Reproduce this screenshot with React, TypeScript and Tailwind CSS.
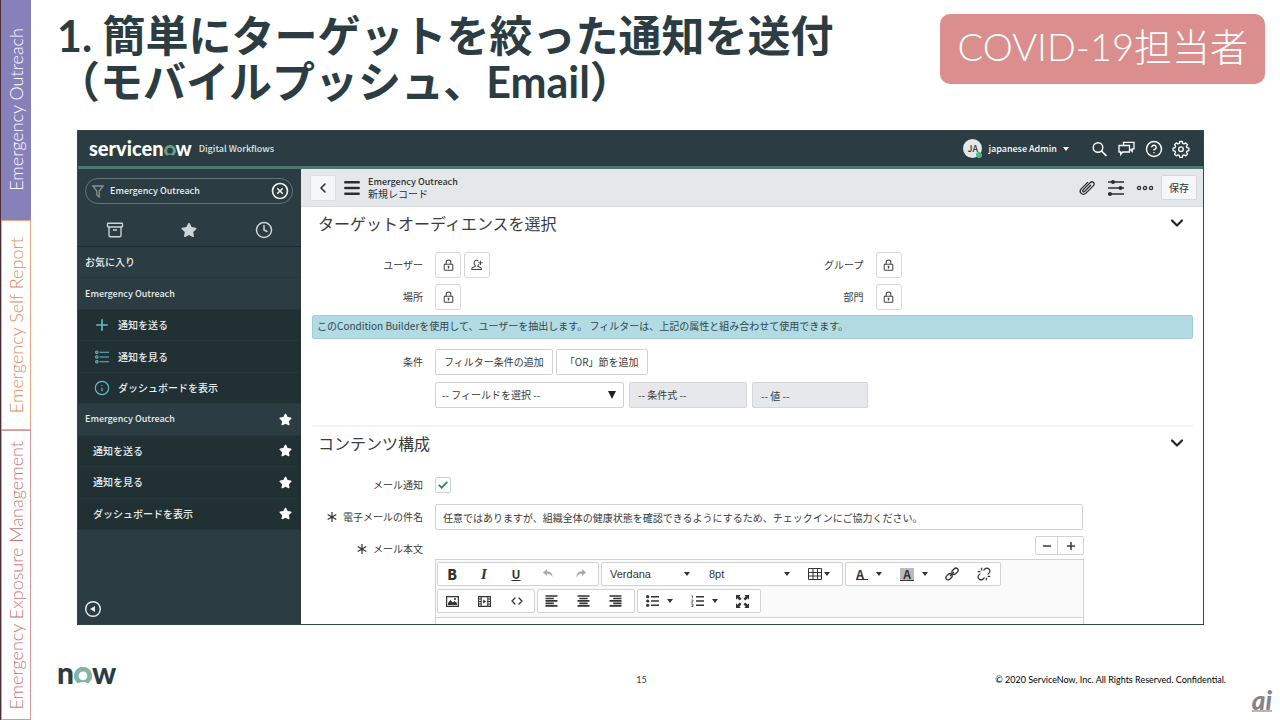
import type { ReactNode } from "react";
import {
  Archive,
  ChevronDown,
  ChevronLeft,
  CircleHelp,
  CircleX,
  Clock,
  Code,
  Info,
  Menu,
  Minus,
  Plus,
  Unlink,
} from "lucide-react";
import { FaStar } from "react-icons/fa";

const ui = "font-['Noto_Sans_CJK_JP',sans-serif]";

function Caret({ className = "" }: { className?: string }) {
  return (
    <svg viewBox="0 0 6 4" className={"h-1 w-1.5 shrink-0 fill-current " + className} aria-hidden="true">
      <path d="M0 0h6L3 4z" />
    </svg>
  );
}

function RingO({ className }: { className: string }) {
  return (
    <svg viewBox="0 0 18 17" className={className} aria-hidden="true">
      <path
        fill="currentColor"
        d="M9 0a9 9 0 0 0-6.2 15.6c.4.5 1 .7 1.6.5a11 11 0 0 1 9.200 0c.6.2 1.200 0 1.600-.5A9 9 0 0 0 9 0Zm0 13.200a4.400 4.400 0 1 1 0-8.800 4.400 4.400 0 0 1 0 8.800Z"
      />
    </svg>
  );
}

function RailItem({ label, className }: { label: string; className: string }) {
  return (
    <a
      href="#"
      className={
        "flex w-[30px] items-center justify-center font-['Lato',sans-serif] text-[18px] leading-6 font-light whitespace-nowrap " +
        className
      }
    >
      <span className="rotate-180 [writing-mode:vertical-rl]">{label}</span>
    </a>
  );
}

function LockIcon() {
  return (
    <svg viewBox="0 0 12 14" className="h-3 w-[11px]" fill="none" stroke="currentColor" strokeWidth="1.200" aria-hidden="true">
      <rect x="1" y="6" width="10" height="7" rx="0.8" />
      <path d="M3.300 6V3.800a2.700 2.700 0 0 1 5.400 0V6M6 8v3M4.800 9.300h2.400" />
    </svg>
  );
}

function AddUserIcon() {
  return (
    <svg viewBox="0 0 14 14" className="size-3" fill="none" stroke="currentColor" strokeWidth="1.200" aria-hidden="true">
      <path d="M8.500 2.400A2.800 2.800 0 0 0 3.600 4.500c0 1.500.6 2.500 1.400 3.200v1L1.800 10c-.6.300-.9.900-.9 2.200h11.200c0-1.300-.3-1.900-.9-2.200L8 8.700v-1c.5-.4.9-1 1.100-1.600M11 2v5M8.500 4.500h5" />
    </svg>
  );
}

function SquareButton({ label, children }: { label: string; children: ReactNode }) {
  return (
    <button
      type="button"
      aria-label={label}
      className="flex size-[26px] items-center justify-center rounded-[3px] border border-[#d5d7d9] bg-white text-[#444]"
    >
      {children}
    </button>
  );
}

function FieldRow({ label, children, required = false, htmlFor }: { label: string; children: ReactNode; required?: boolean; htmlFor?: string }) {
  return (
    <div className="flex gap-3">
      <label htmlFor={htmlFor} className="flex h-[26px] w-[111px] shrink-0 items-center justify-end gap-1.5 whitespace-nowrap">
        {required && (
          <svg viewBox="0 0 10 10" className="size-2.5" stroke="#333" strokeWidth="1.200" aria-hidden="true">
            <path d="M5 0v10M.7 2.500l8.600 5M9.300 2.500l-8.600 5" />
          </svg>
        )}
        {label}
      </label>
      {children}
    </div>
  );
}

function SectionTitle({ children }: { children: ReactNode }) {
  return (
    <div className="flex h-8 items-center justify-between pr-1.5 pl-1.5">
      <h2 className="text-[16px] leading-6 text-[#3c3c3c]">{children}</h2>
      <button type="button" aria-label="セクションを折りたたむ">
        <ChevronDown className="size-5 text-[#222]" strokeWidth={2.6} />
      </button>
    </div>
  );
}

function ToolGroup({ className, children }: { className: string; children: ReactNode }) {
  return (
    <div className={"flex h-6 shrink-0 items-center rounded-[2px] border border-[#d0d2d4] bg-white text-[#333] " + className}>
      {children}
    </div>
  );
}

function Tool({ label, children, className = "w-[32px]" }: { label: string; children: ReactNode; className?: string }) {
  return (
    <button type="button" aria-label={label} className={"flex h-full items-center justify-center " + className}>
      {children}
    </button>
  );
}

function NavIcon({ name }: { name: string }) {
  if (name === "plus") return <Plus className="size-[18px] shrink-0" strokeWidth={2.2} />;
  if (name === "info") return <Info className="size-4 shrink-0" strokeWidth={1.8} />;
  return (
    <svg viewBox="0 0 14 14" className="size-3.5" fill="none" stroke="currentColor" strokeWidth="1.100" aria-hidden="true">
      <circle cx="1.800" cy="2.200" r="1.200" />
      <circle cx="1.800" cy="7" r="1.200" />
      <circle cx="1.800" cy="11.800" r="1.200" />
      <path d="M4.500 2.200H14M4.500 7H14M4.500 11.800H14" />
    </svg>
  );
}

const navRows = [
  { label: "お気に入り", kind: "section" },
  { label: "Emergency Outreach", kind: "head" },
  { label: "通知を送る", kind: "icon", icon: "plus" },
  { label: "通知を見る", kind: "icon", icon: "list" },
  { label: "ダッシュボードを表示", kind: "icon", icon: "info" },
  { label: "Emergency Outreach", kind: "head", star: true },
  { label: "通知を送る", kind: "sub", star: true },
  { label: "通知を見る", kind: "sub", star: true },
  { label: "ダッシュボードを表示", kind: "sub", star: true },
];

const rowStyles: Record<string, string> = {
  section: "bg-[#2b3d42] pl-[7px] text-[10px]",
  head: "bg-[#2b3d42] pl-[7px] text-[9px]",
  icon: "bg-[#213033] pl-4 text-[10px]",
  sub: "bg-[#213033] pl-[15px] text-[10px]",
};

function Sidebar() {
  return (
    <nav className="flex w-[223px] shrink-0 flex-col bg-[#2b3d42] text-[#e9eeee]">
      <div className="pt-[9px] pr-2 pl-[7px]">
        <label className="flex h-[26px] items-center rounded-full border border-[#62757a] pr-[3px] pl-1.5">
          <svg viewBox="0 0 12 13" className="h-[13px] w-3 text-[#83949a]" fill="none" stroke="currentColor" strokeWidth="1.300" aria-hidden="true">
            <path d="M.8 1h10.400L7.200 6v6L4.800 10V6z" />
          </svg>
          <input
            aria-label="ナビゲーターをフィルター"
            defaultValue="Emergency Outreach"
            className="ml-1.5 min-w-0 flex-1 bg-transparent text-[9px] leading-4 font-medium outline-none"
          />
          <button type="button" aria-label="クリア">
            <CircleX className="size-[18px]" strokeWidth={2.2} />
          </button>
        </label>
      </div>
      <div className="grid h-[43px] grid-cols-3 place-items-center border-b border-[#1d2b2e] pt-2.5 text-[#ccd4d5]">
        <button type="button" aria-label="すべて"><Archive className="size-[18px]" strokeWidth={1.8} /></button>
        <button type="button" aria-label="お気に入り"><FaStar className="size-4" /></button>
        <button type="button" aria-label="履歴"><Clock className="size-[18px]" strokeWidth={2} /></button>
      </div>
      <ul className="grid h-[283px] auto-rows-fr">
        {navRows.map((row, i) => (
          <li key={i} className={"flex items-center border-b border-[#26373b] pr-[9px] leading-4 font-medium " + rowStyles[row.kind]}>
            <a href="#" className="flex flex-1 items-center">
              {row.icon && (
                <span className="mr-2 flex w-4 justify-center text-[#66b9c9]">
                  <NavIcon name={row.icon} />
                </span>
              )}
              {row.label}
            </a>
            {row.star && <FaStar className="size-[13px] text-white" />}
          </li>
        ))}
      </ul>
      <div className="mt-auto flex px-1.5 pb-1.5">
        <button type="button" aria-label="ナビゲーターを閉じる">
          <svg viewBox="0 0 18 18" className="size-[18px]" aria-hidden="true">
            <circle cx="9" cy="9" r="7.300" fill="none" stroke="currentColor" strokeWidth="1.400" />
            <path d="M6 9l5-3v6z" fill="currentColor" />
          </svg>
        </button>
      </div>
    </nav>
  );
}

function AppHeader() {
  return (
    <header className="flex h-[38px] items-center justify-between border-b-[3px] border-[#4a7a6d] bg-[#2b3d42] pr-[13px] pl-[11px] text-white">
      <div className="flex items-center">
        <a href="#" aria-label="servicenow" className="-mt-0.5 flex items-baseline font-['Lato',sans-serif] text-[20px] leading-7 font-black">
          servicen
          <RingO className="h-[11px] w-3 text-[#62a08d]" />w
        </a>
        <span className="ml-[7px] text-[9px] leading-4 font-medium text-[#dfe5e5]">Digital Workflows</span>
      </div>
      <div className="flex items-center">
        <button type="button" className="flex items-center text-[9px] leading-4 font-medium">
          <span className="relative mr-1.5 flex size-[19px] items-center justify-center rounded-full bg-[#e4e8e8] text-[#333]">
            JA
            <span className="absolute right-0 bottom-0 size-1.5 rounded-full bg-[#3fc08a]" />
          </span>
          japanese Admin
          <Caret className="ml-1.5" />
        </button>
        <div className="ml-[22px] flex items-center gap-[9px]">
          <button type="button" aria-label="検索">
            <svg viewBox="0 0 18 18" className="size-[18px]" fill="none" stroke="currentColor" strokeWidth="1.400" aria-hidden="true">
              <circle cx="7" cy="7.500" r="4.800" />
              <path d="M10.500 11l5 5" strokeWidth="1.700" />
            </svg>
          </button>
          <button type="button" aria-label="会話">
            <svg viewBox="0 0 18 18" className="size-[18px]" fill="none" stroke="currentColor" strokeWidth="1.300" aria-hidden="true">
              <path d="M5.500 5.500V2.300H16v6.500h-1.800v2.500l-1.800-2M1 5.500h10.500V12H4.700l-2 2.500V12H1z" />
            </svg>
          </button>
          <button type="button" aria-label="ヘルプ"><CircleHelp className="size-[18px]" strokeWidth={1.9} /></button>
          <button type="button" aria-label="設定">
            <svg viewBox="0 0 18 18" className="size-[18px]" fill="none" stroke="currentColor" strokeWidth="1.300" strokeLinejoin="round" aria-hidden="true">
              <path d="M7.700 1.500h2.600l.4 2 1.300.5 1.700-1.100 1.800 1.800-1.100 1.700.5 1.300 2 .4v2.600l-2 .4-.5 1.300 1.100 1.700-1.800 1.800-1.700-1.100-1.300.5-.4 2H7.700l-.4-2-1.300-.5-1.700 1.100-1.800-1.800 1.100-1.700-.5-1.300-2-.4V8.100l2-.4.5-1.300-1.100-1.700 1.800-1.800L6 4l1.300-.5z" />
              <circle cx="9" cy="9.200" r="2.300" />
            </svg>
          </button>
        </div>
      </div>
    </header>
  );
}

function RecordBar() {
  return (
    <div className="flex h-[38px] items-center justify-between border-b border-[#d9dcdf] bg-[#e5e8eb] pr-1.5 pl-[9px] text-[#2e2e2e]">
      <div className="flex items-center">
        <button type="button" aria-label="戻る" className="flex size-[26px] items-center justify-center rounded-[2px] border border-[#dcdfe1] bg-[#f5f6f7]">
          <ChevronLeft className="size-4" strokeWidth={2.4} />
        </button>
        <button type="button" aria-label="メニュー" className="ml-1.5">
          <Menu className="size-5" strokeWidth={3} />
        </button>
        <h1 className="ml-1.5 flex flex-col leading-3">
          <span className="text-[9px] font-medium">Emergency Outreach</span>
          <span className="text-[10px]">新規レコード</span>
        </h1>
      </div>
      <div className="flex items-center gap-[11px]">
        <button type="button" aria-label="添付ファイル">
          <svg viewBox="0 0 18 18" className="size-[18px]" fill="none" stroke="currentColor" strokeWidth="1.300" strokeLinecap="round" aria-hidden="true">
            <path
              transform="rotate(45 9 9)"
              d="M5.500 4.500v9.200a3.200 3.200 0 0 0 6.400 0V2.700a2.200 2.200 0 0 0-4.400 0v10.500a1.100 1.100 0 0 0 2.200 0V4.500"
            />
          </svg>
        </button>
        <button type="button" aria-label="パーソナライズ">
          <svg viewBox="0 0 18 18" className="size-[18px]" stroke="currentColor" strokeWidth="1.500" aria-hidden="true">
            <path d="M1 3h16M1 9h16M1 15h16" />
            <circle cx="6" cy="3" r="2" fill="currentColor" stroke="none" />
            <circle cx="13.500" cy="9" r="2" fill="currentColor" stroke="none" />
            <circle cx="3" cy="15" r="2" fill="currentColor" stroke="none" />
          </svg>
        </button>
        <button type="button" aria-label="その他">
          <svg viewBox="0 0 18 6" className="h-1.5 w-[18px]" fill="none" stroke="currentColor" strokeWidth="1.300" aria-hidden="true">
            <circle cx="3" cy="3" r="1.600" />
            <circle cx="9" cy="3" r="1.600" />
            <circle cx="15" cy="3" r="1.600" />
          </svg>
        </button>
        <button type="button" className="-ml-1 h-[25px] rounded-[2px] border border-[#d5d8da] bg-[#f5f6f7] px-[7px] text-[10px]">保存</button>
      </div>
    </div>
  );
}

function Audience() {
  const btn = "h-[26px] rounded-[2px] border border-[#d0d2d4] bg-white px-2";
  const disabled = "h-[26px] appearance-none rounded-[2px] border border-[#d3d6d9] bg-[#e6e8eb] pl-2 opacity-100";
  return (
    <section className="border-b-2 border-[#f3f3f3] pb-[17px]">
      <SectionTitle>ターゲットオーディエンスを選択</SectionTitle>
      <div className="mt-[13px] grid grid-cols-2 gap-y-1.5">
        <FieldRow label="ユーザー">
          <div className="flex gap-[3px]">
            <SquareButton label="ユーザーのロックを解除"><LockIcon /></SquareButton>
            <SquareButton label="自分を追加"><AddUserIcon /></SquareButton>
          </div>
        </FieldRow>
        <FieldRow label="グループ">
          <SquareButton label="グループのロックを解除"><LockIcon /></SquareButton>
        </FieldRow>
        <FieldRow label="場所">
          <SquareButton label="場所のロックを解除"><LockIcon /></SquareButton>
        </FieldRow>
        <FieldRow label="部門">
          <SquareButton label="部門のロックを解除"><LockIcon /></SquareButton>
        </FieldRow>
      </div>
      <p className="mt-[5px] rounded-[2px] border border-[#9fcdd6] bg-[#b3dbe3] px-1 pt-px pb-[3px] leading-[18px] text-[#2c4a50]">
        このCondition Builderを使用して、ユーザーを抽出します。 フィルターは、上記の属性と組み合わせて使用できます。
      </p>
      <div className="mt-2.5">
        <FieldRow label="条件">
          <div className="flex flex-col gap-[7px]">
            <div className="flex gap-[3px]">
              <button type="button" className={btn}>フィルター条件の追加</button>
              <button type="button" className={btn}>「OR」節を追加</button>
            </div>
            <div className="flex gap-[5px]">
              <div className="grid items-center">
                <select aria-label="フィールド" className="col-start-1 row-start-1 h-[26px] w-[189px] appearance-none rounded-[2px] border border-[#d0d2d4] bg-white pl-1.5">
                  <option>-- フィールドを選択 --</option>
                </select>
                <svg viewBox="0 0 8 8" className="pointer-events-none col-start-1 row-start-1 mr-2 size-2 justify-self-end fill-[#222]" aria-hidden="true">
                  <path d="M0 0h8L4 8z" />
                </svg>
              </div>
              <select disabled aria-label="条件式" className={"w-[118px] " + disabled}>
                <option>-- 条件式 --</option>
              </select>
              <input disabled aria-label="値" defaultValue="-- 値 --" className={"w-[116px] " + disabled} />
            </div>
          </div>
        </FieldRow>
      </div>
    </section>
  );
}

const alignments = [
  { label: "左揃え", d: "M0 1h13M0 3.700h9M0 6.400h13M0 9.100h9M0 11.800h13" },
  { label: "中央揃え", d: "M0 1h13M2 3.700h9M0 6.400h13M2 9.100h9M0 11.800h13" },
  { label: "右揃え", d: "M0 1h13M4 3.700h9M0 6.400h13M4 9.100h9M0 11.800h13" },
];

function Toolbar() {
  return (
    <div className="flex flex-col gap-[3px] border-b border-[#d0d2d4] bg-[#fafafa] pt-0.5 pb-1 pl-px">
      <div className="flex gap-0.5">
        <ToolGroup className="w-[162px]">
          <Tool label="太字" className="w-[28px]"><span className="text-[14px] font-black">B</span></Tool>
          <Tool label="斜体" className="w-[36px]"><span className="font-['Liberation_Serif',serif] text-[15px] font-bold italic">I</span></Tool>
          <Tool label="下線" className="w-[28px]"><span className="text-[12px] font-bold underline underline-offset-1">U</span></Tool>
          <Tool label="元に戻す" className="w-[36px]">
            <svg viewBox="0 0 10 10" className="size-2.5 fill-[#aaa]" aria-hidden="true"><path d="M4 0L0 3.500 4 7V4.800c2.500 0 4.300.7 5.600 3.700C9.600 4.500 7.500 2.300 4 2.200z" /></svg>
          </Tool>
          <Tool label="やり直し" className="w-[30px]">
            <svg viewBox="0 0 10 10" className="size-2.5 fill-[#aaa]" aria-hidden="true"><path d="M6 0l4 3.500L6 7V4.800C3.500 4.800 1.700 5.500.4 8.500.4 4.500 2.500 2.300 6 2.200z" /></svg>
          </Tool>
        </ToolGroup>
        <ToolGroup className="w-[242px] font-['Liberation_Sans',sans-serif] text-[11px]">
          <div className="grid w-[94px] items-center">
            <select aria-label="フォント" className="col-start-1 row-start-1 w-full appearance-none bg-transparent pl-2">
              <option>Verdana</option>
            </select>
            <Caret className="pointer-events-none col-start-1 row-start-1 mr-1.5 justify-self-end" />
          </div>
          <div className="grid w-[100px] items-center">
            <select aria-label="文字サイズ" className="col-start-1 row-start-1 w-full appearance-none bg-transparent pl-[13px]">
              <option>8pt</option>
            </select>
            <Caret className="pointer-events-none col-start-1 row-start-1 mr-1.5 justify-self-end" />
          </div>
          <Tool label="表" className="w-[46px] gap-0.5">
            <svg viewBox="0 0 14 12" className="h-3 w-3.5" fill="none" stroke="currentColor" aria-hidden="true">
              <path d="M.5.5h13v11H.5zM.5 4.500h13M.5 8h13M5 .5v11M9.500.5v11" />
            </svg>
            <Caret />
          </Tool>
        </ToolGroup>
        <ToolGroup className="w-[156px]">
          <Tool label="文字色" className="w-[46px] gap-2"><span className="border-b border-[#333] pr-1 text-[12px] leading-[11px] font-bold">A</span><Caret /></Tool>
          <Tool label="背景色" className="w-[44px] gap-2"><span className="border-b border-[#333] bg-[#bbb] px-[3px] text-[12px] leading-[12px] font-bold">A</span><Caret /></Tool>
          <Tool label="リンク">
            <svg viewBox="0 0 14 14" className="size-3.5" fill="none" stroke="currentColor" strokeWidth="1.300" aria-hidden="true">
              <rect x="6.500" y="2" width="7" height="4.400" rx="2.200" transform="rotate(-45 10 4.200)" />
              <rect x=".5" y="7.600" width="7" height="4.400" rx="2.200" transform="rotate(-45 4 9.800)" />
              <path d="M5 9l4-4" />
            </svg>
          </Tool>
          <Tool label="リンク解除"><Unlink className="size-3.5" strokeWidth={2} /></Tool>
        </ToolGroup>
      </div>
      <div className="flex gap-0.5">
        <ToolGroup className="w-[98px]">
          <Tool label="画像" className="w-[29px]">
            <svg viewBox="0 0 13 11" className="h-[11px] w-[13px]" aria-hidden="true"><path d="M.6.6h11.800v9.800H.6z" fill="none" stroke="currentColor" strokeWidth="1.200" /><path d="M2 9V7l2.500-3 2.300 2.500L8.500 5 11 7v2z" fill="currentColor" /><circle cx="9" cy="3" r="1" fill="currentColor" /></svg>
          </Tool>
          <Tool label="動画" className="w-[35px]">
            <svg viewBox="0 0 13 11" className="h-[11px] w-[13px]" aria-hidden="true"><path d="M.6.6h11.800v9.800H.6zM3.200.6v9.800M9.800.6v9.800M.6 3h2.600M.6 5.500h2.600M.6 8h2.600M9.800 3h2.600M9.800 5.500h2.600M9.800 8h2.600" fill="none" stroke="currentColor" strokeWidth="1.100" /><path d="M5.200 3.500v4l3-2z" fill="currentColor" /></svg>
          </Tool>
          <Tool label="ソースコード" className="w-[29px]"><Code className="size-3" strokeWidth={2.6} /></Tool>
        </ToolGroup>
        <ToolGroup className="w-[98px]">
          {alignments.map((a) => (
            <Tool key={a.label} label={a.label} className="w-8 pr-1.5">
              <svg viewBox="0 0 13 13" className="h-3 w-[13px]" stroke="currentColor" strokeWidth="1.700" aria-hidden="true"><path d={a.d} /></svg>
            </Tool>
          ))}
        </ToolGroup>
        <ToolGroup className="w-[124px]">
          <Tool label="箇条書き" className="w-[42px] gap-2">
            <svg viewBox="0 0 13 12" className="h-3 w-[13px]" fill="currentColor" aria-hidden="true"><circle cx="1.700" cy="1.700" r="1.600" /><circle cx="1.700" cy="6" r="1.600" /><circle cx="1.700" cy="10.300" r="1.600" /><path d="M5 1h8v1.500H5zM5 5.300h8v1.500H5zM5 9.600h8v1.500H5z" /></svg>
            <Caret />
          </Tool>
          <Tool label="番号付きリスト" className="w-[48px] gap-2">
            <svg viewBox="0 0 13 12" className="h-3 w-[13px]" fill="currentColor" aria-hidden="true"><path d="M5 1h8v1.500H5zM5 5.300h8v1.500H5zM5 9.600h8v1.500H5z" /><path d="M.5.8h1v2.500M.3 5h1.700v1L.5 7.200h1.700M.3 9h1.700v2.500H.3M.8 10.200H2" fill="none" stroke="currentColor" strokeWidth=".7" /></svg>
            <Caret />
          </Tool>
          <Tool label="全画面表示" className="w-7">
            <svg viewBox="0 0 14 14" className="size-[13px]" aria-hidden="true"><path d="M0 0h5L3.600 1.500 6 4 4 6 1.500 3.600 0 5zM14 0v5l-1.500-1.400L10 6 8 4l2.400-2.500L9 0zM0 14V9l1.500 1.400L4 8l2 2-2.400 2.500L5 14zM14 14H9l1.400-1.500L8 10l2-2 2.500 2.400L14 9z" fill="currentColor" /></svg>
          </Tool>
        </ToolGroup>
      </div>
    </div>
  );
}

function Content() {
  return (
    <section>
      <SectionTitle>コンテンツ構成</SectionTitle>
      <div className="mt-[13px] flex flex-col gap-1.5">
        <FieldRow label="メール通知" htmlFor="notify">
          <div className="grid size-4 place-items-center self-center">
            <input id="notify" type="checkbox" defaultChecked className="col-start-1 row-start-1 size-4 appearance-none rounded-[2px] border border-[#c5d6d2] bg-white" />
            <svg viewBox="0 0 10 8" className="pointer-events-none col-start-1 row-start-1 h-2 w-2.5" fill="none" stroke="#2c8a63" strokeWidth="1.800" aria-hidden="true">
              <path d="M.8 3.800l2.900 2.900L9.300.8" />
            </svg>
          </div>
        </FieldRow>
        <FieldRow label="電子メールの件名" required htmlFor="subject">
          <div className="flex-1 pr-[110px]">
            <input
              id="subject"
              defaultValue="任意ではありますが、組織全体の健康状態を確認できるようにするため、チェックインにご協力ください。"
              className="block h-[26px] w-full rounded-[2px] border border-[#d0d2d4] bg-white px-[7px]"
            />
          </div>
        </FieldRow>
        <FieldRow label="メール本文" required>
          <div className="flex-1 pr-[109px]">
            <div className="flex justify-end">
              <div className="flex h-[19px] rounded-[2px] border border-[#d0d2d4]">
                <button type="button" aria-label="縮小" className="flex w-[22px] items-center justify-center border-r border-[#d0d2d4]"><Minus className="size-3" strokeWidth={3} /></button>
                <button type="button" aria-label="拡大" className="flex w-[25px] items-center justify-center"><Plus className="size-3" strokeWidth={3} /></button>
              </div>
            </div>
            <div className="mt-1 border border-b-0 border-[#d0d2d4]">
              <Toolbar />
              <div className="h-1.5 bg-white" />
            </div>
          </div>
        </FieldRow>
      </div>
    </section>
  );
}

export default function App() {
  return (
    <div className="relative flex min-h-screen bg-white text-[#2b3d42]">
      <aside className="flex shrink-0 flex-col border-l border-[#4a3036]">
        <RailItem label="Emergency Outreach" className="grow-[221] basis-0 bg-[#8681bb] text-white" />
        <RailItem label="Emergency Self Report" className="grow-[209] basis-0 border border-[#e3a988] text-[#dd8d5c]" />
        <RailItem label="Emergency Exposure Management" className="grow-[290] basis-0 border border-[#d79a9a] text-[#c97676]" />
      </aside>
      <div className="flex min-w-0 flex-1 flex-col">
        <div className="flex items-start justify-between pt-[13px] pr-[15px] pl-[26px]">
          <h1 className="font-['Lato','Noto_Sans_CJK_JP',sans-serif] text-[43px] leading-[46px] font-bold whitespace-nowrap">
            1. 簡単にターゲットを絞った通知を送付
            <br />
            （モバイルプッシュ、Email）
          </h1>
          <div className="mt-px rounded-[10px] bg-[#da8f8e] px-[17px] pt-2 pb-[14px] font-['Lato','Noto_Sans_CJK_JP',sans-serif] text-[38px] leading-[48px] font-light whitespace-nowrap text-white">
            COVID-19担当者
          </div>
        </div>

        <div className={"mt-[25px] mr-[76px] ml-[46px] border border-[#33474b] " + ui}>
          <AppHeader />
          <div className="flex">
            <Sidebar />
            <main className="min-w-0 flex-1 bg-white text-[10px] leading-4 text-[#3a3a3a]">
              <RecordBar />
              <div className="pr-2.5 pl-[11px]">
                <Audience />
                <Content />
              </div>
            </main>
          </div>
        </div>

        <footer className="mt-auto grid grid-cols-3 items-end pr-[54px] pb-8 pl-[26px] font-['Lato',sans-serif] text-[9px] leading-4">
          <div aria-label="now" className="flex items-baseline text-[30px] leading-8 font-black">
            n<RingO className="h-[17px] w-[18px] text-[#82b5a2]" />w
          </div>
          <span className="text-center">15</span>
          <span className="text-right whitespace-nowrap text-black">© 2020 ServiceNow, Inc. All Rights Reserved. Confidential.</span>
        </footer>
        <div className="absolute right-2 bottom-2 border-b-2 border-[#b5b5b5] font-['Lato',sans-serif] text-[26px] leading-5 font-black text-[#858585] italic">
          ai
        </div>
      </div>
    </div>
  );
}
